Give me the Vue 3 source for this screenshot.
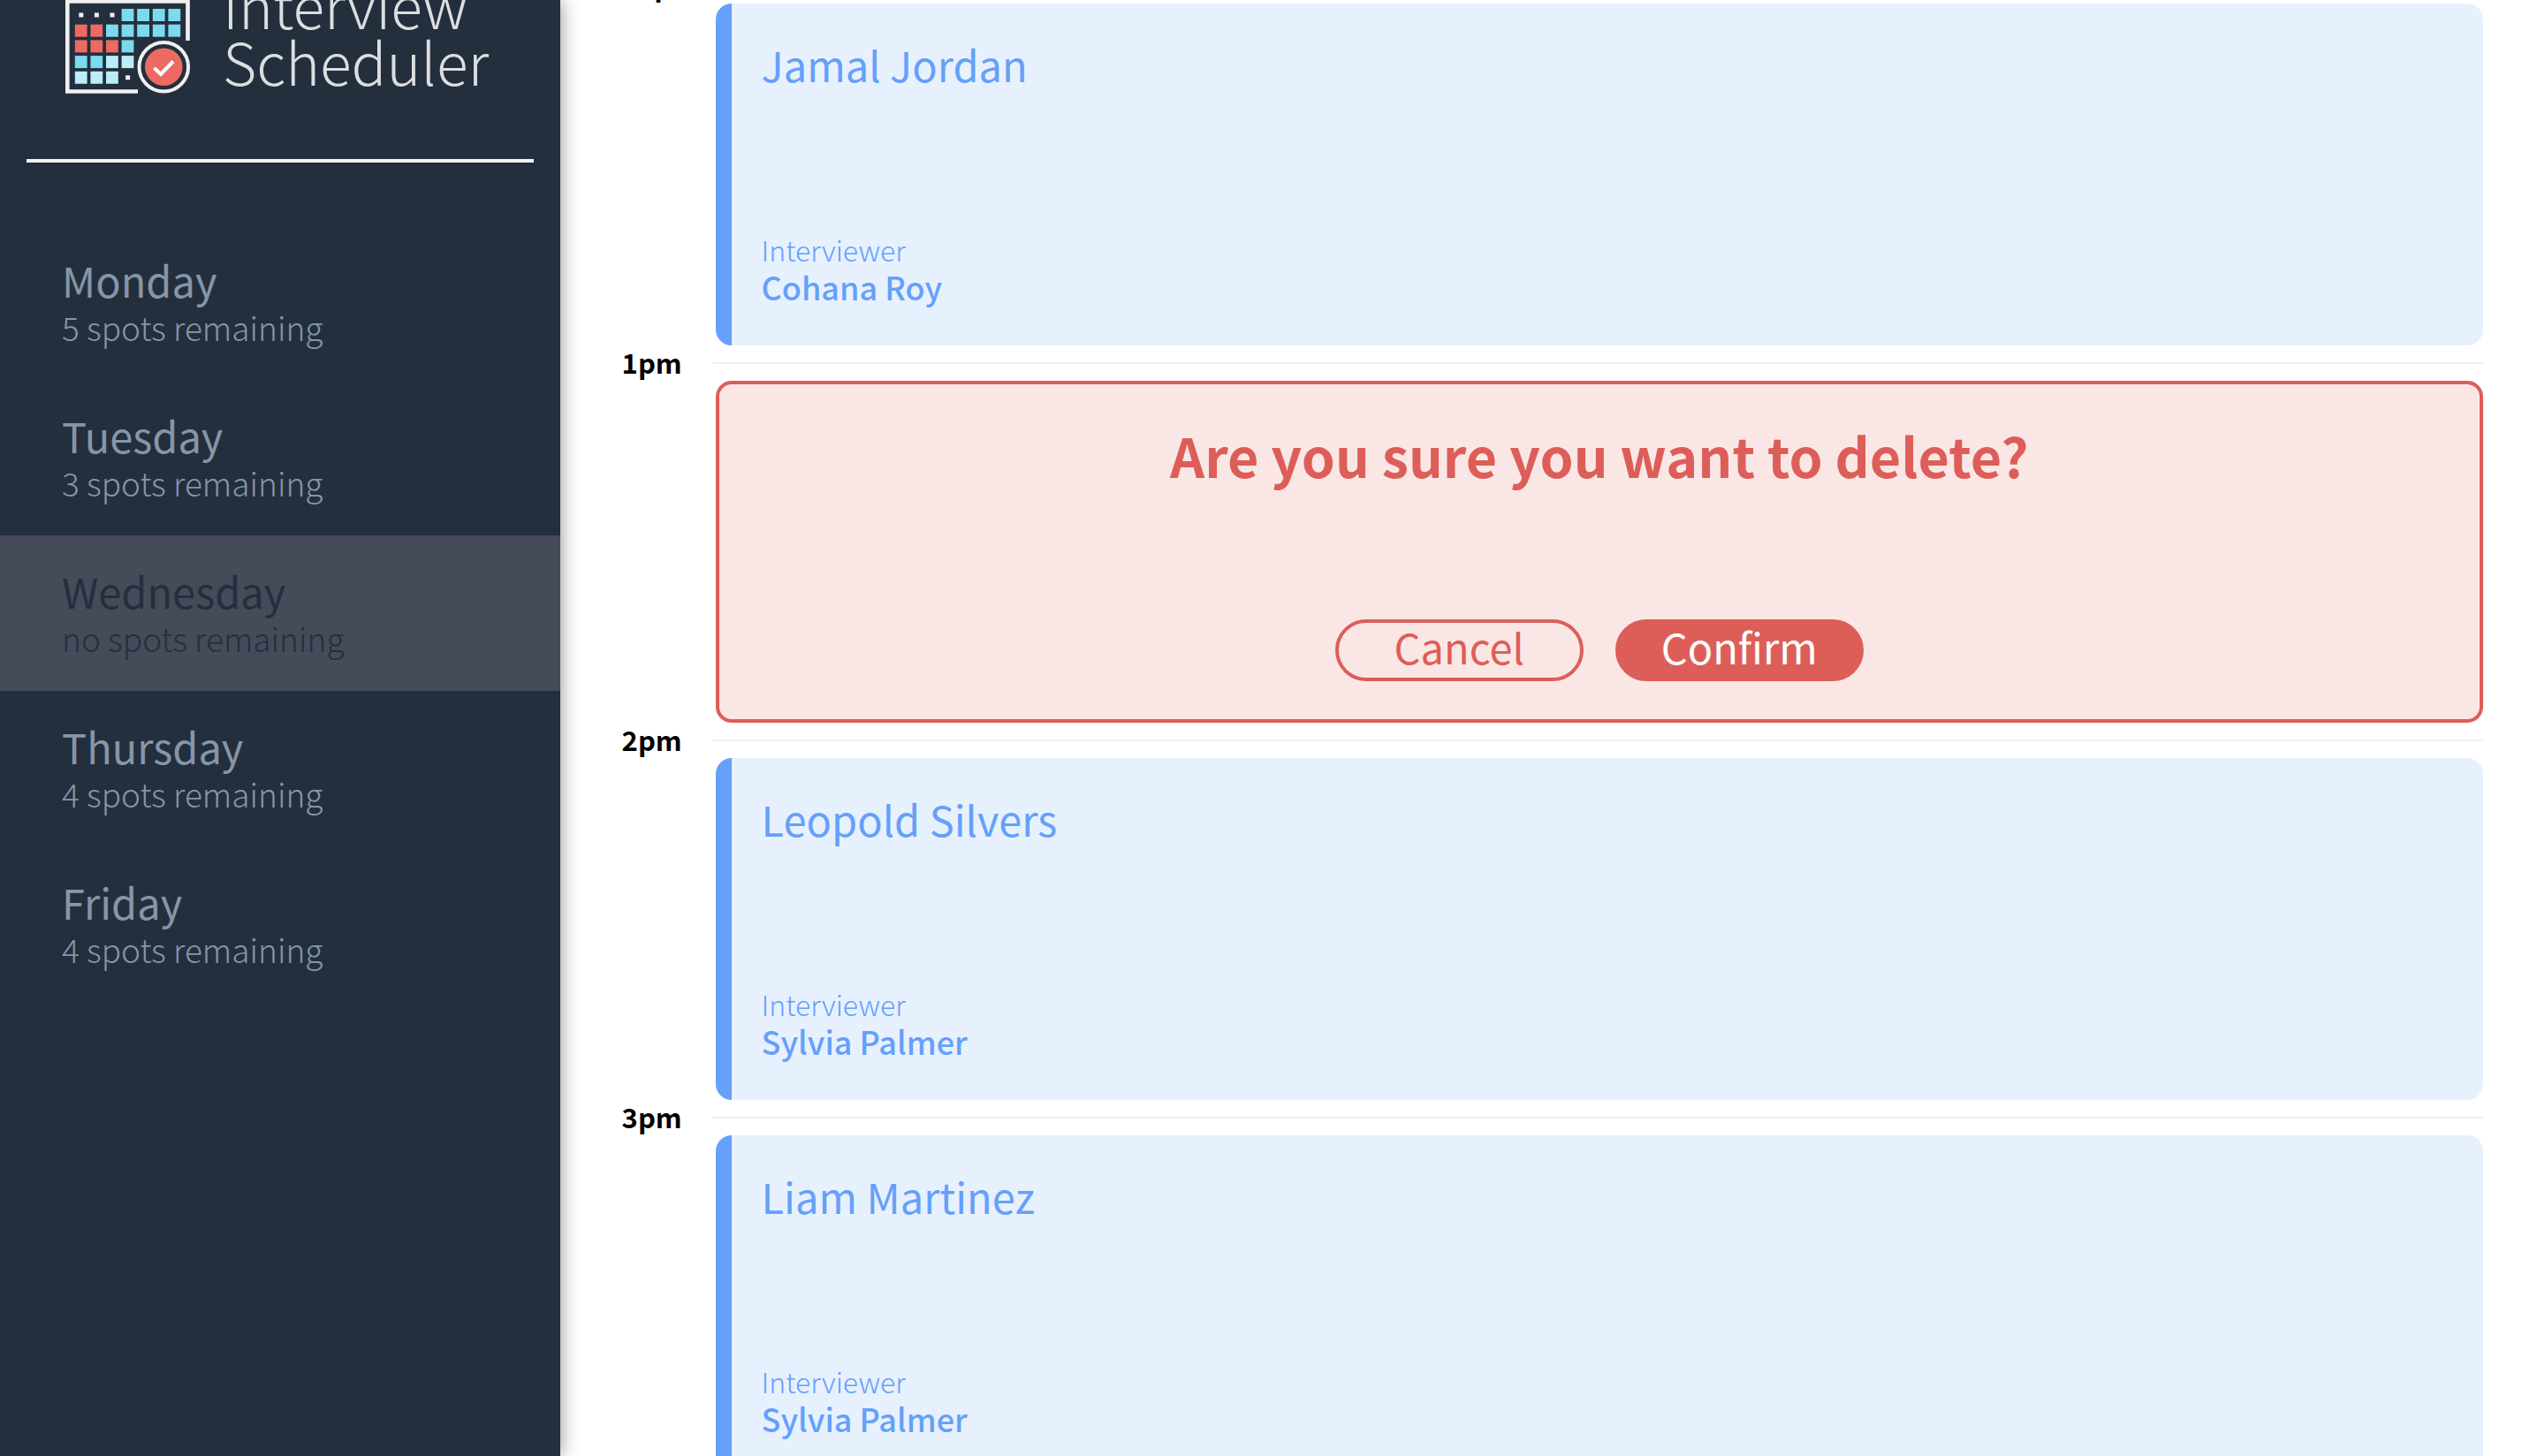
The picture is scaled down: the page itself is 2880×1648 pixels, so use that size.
<script setup>
import { ref } from 'vue'

const selectedDay = ref('Wednesday')

const days = [
  { name: 'Monday', spots: '5 spots remaining' },
  { name: 'Tuesday', spots: '3 spots remaining' },
  { name: 'Wednesday', spots: 'no spots remaining', full: true },
  { name: 'Thursday', spots: '4 spots remaining' },
  { name: 'Friday', spots: '4 spots remaining' }
]

const appointments = [
  { time: '12pm', student: 'Jamal Jordan', interviewer: 'Cohana Roy' },
  { time: '1pm', confirming: true },
  { time: '2pm', student: 'Leopold Silvers', interviewer: 'Sylvia Palmer' },
  { time: '3pm', student: 'Liam Martinez', interviewer: 'Sylvia Palmer' }
]

// Calendar cells: d = dot, c = cyan, r = red, l = light cyan
const cells = ['dddcccc', 'rrccccc', 'rrrc', 'ccll', 'llld'].flatMap((row, y) =>
  [...row].map((kind, x) => ({ kind, x: 10.8 + x * 17.6, y: 40 + y * 17.7 }))
)
const fills = { c: '#7bdaee', r: '#ed6a62', l: '#b9eef8' }
</script>

<template>
  <div class="layout">
    <aside class="sidebar">
      <header class="brand">
        <svg class="brand-icon" viewBox="0 0 142 136" aria-hidden="true">
          <path d="M82 133.5H2.3V31.5H138.5V76" fill="none" stroke="#f0f0f0" stroke-width="4.6" />
          <template v-for="(cell, i) in cells" :key="i">
            <rect v-if="cell.kind === 'd'" :x="cell.x + 4.5" :y="cell.y + 4.5" width="5" height="5" fill="#f0f0f0" />
            <rect v-else :x="cell.x" :y="cell.y" width="13.8" height="14" :fill="fills[cell.kind]" />
          </template>
          <circle cx="111.3" cy="105.7" r="27.8" fill="none" stroke="#f0f0f0" stroke-width="4" />
          <circle cx="111.3" cy="105.7" r="21.3" fill="#ed6a62" />
          <path d="M100.5 107l7.5 7 14-14.5" fill="none" stroke="#fff" stroke-width="4" />
        </svg>
        <h1 class="brand-name">Interview<br />Scheduler</h1>
      </header>
      <hr class="rule" />
      <nav>
        <button
          v-for="day in days"
          :key="day.name"
          type="button"
          class="day"
          :class="{ selected: day.name === selectedDay, full: day.full }"
          @click="selectedDay = day.name"
        >
          <span class="day-name">{{ day.name }}</span>
          <span class="day-spots">{{ day.spots }}</span>
        </button>
      </nav>
    </aside>

    <main class="schedule">
      <section v-for="item in appointments" :key="item.time" class="slot">
        <h2 class="time">{{ item.time }}</h2>
        <div class="slot-body">
          <article v-if="item.confirming" class="card confirm">
            <p class="question">Are you sure you want to delete?</p>
            <div class="actions">
              <button type="button" class="btn">Cancel</button>
              <button type="button" class="btn solid">Confirm</button>
            </div>
          </article>
          <article v-else class="card show">
            <h3 class="student">{{ item.student }}</h3>
            <div>
              <p class="label">Interviewer</p>
              <p class="interviewer">{{ item.interviewer }}</p>
            </div>
          </article>
        </div>
      </section>
    </main>
  </div>
</template>

<style>
body {
  overflow: hidden;
  background: #fff;
}
</style>

<style scoped>
* {
  box-sizing: border-box;
  margin: 0;
}

.layout {
  display: flex;
  height: 100vh;
  overflow: hidden;
  font-family: "Noto Sans CJK SC", "Noto Sans CJK JP", sans-serif;
}

.sidebar {
  position: relative;
  flex: none;
  width: 22%;
  background: #242f3d;
  box-shadow: 0 0 20px rgba(0, 0, 0, 0.45);
}

.brand {
  display: flex;
  gap: 36px;
  margin-top: -30px;
  padding-left: 74px;
}

.brand-icon {
  flex: none;
  width: 142px;
  height: 136px;
}

.brand-name {
  padding-top: 2px;
  color: #dcdee0;
  font-size: 66px;
  font-weight: 300;
  line-height: 64px;
}

.rule {
  height: 4px;
  margin: 74px 30px 70px;
  border: 0;
  background: #f2f3f3;
}

.day {
  display: block;
  width: 100%;
  padding: 34px 70px 36px;
  border: 0;
  background: none;
  color: #8596a8;
  font-family: inherit;
  text-align: left;
  cursor: pointer;
}

.day.selected {
  background: #454b59;
}

.day.full {
  color: #242f3d;
}

.day-name,
.day-spots {
  display: block;
}

.day-name {
  font-size: 47px;
  font-weight: 400;
  line-height: 58px;
}

.day-spots {
  font-size: 37px;
  font-weight: 300;
  line-height: 48px;
}

.schedule {
  flex: 1;
  min-width: 0;
  margin-top: -17px;
  padding: 0 70px;
}

.slot {
  display: flex;
}

.time {
  flex: none;
  width: 102px;
  color: #000;
  font-size: 31px;
  font-weight: 700;
  line-height: 0;
}

.slot-body {
  flex: 1;
  min-width: 0;
  padding: 19px 0 19px 4px;
  border-top: 2px solid #f1f1f1;
}

.card {
  display: flex;
  flex-direction: column;
  justify-content: space-between;
  min-height: 387px;
  border-radius: 18px;
}

.show {
  padding: 40px 34px 46px;
  border-left: 18px solid #65a0fa;
  background: #e7f1fe;
  color: #65a0fa;
}

.student {
  font-size: 47px;
  font-weight: 400;
  line-height: 58px;
}

.label {
  font-size: 32px;
  font-weight: 300;
  line-height: 42px;
}

.interviewer {
  font-size: 36px;
  font-weight: 500;
  line-height: 42px;
}

.confirm {
  align-items: center;
  padding: 44px 42px 43px;
  border: 4px solid #dd5e59;
  background: #fae7e5;
  color: #dd5e59;
}

.question {
  font-size: 61px;
  font-weight: 700;
  line-height: 72px;
}

.actions {
  display: flex;
  gap: 36px;
}

.btn {
  display: flex;
  align-items: center;
  justify-content: center;
  width: 281px;
  height: 70px;
  padding: 0 0 8px;
  border: 4px solid #dd5e59;
  border-radius: 35px;
  background: none;
  color: #dd5e59;
  font-family: inherit;
  font-size: 47px;
  font-weight: 400;
  line-height: 54px;
  cursor: pointer;
}

.btn.solid {
  background: #dd5e59;
  color: #fff;
}
</style>
